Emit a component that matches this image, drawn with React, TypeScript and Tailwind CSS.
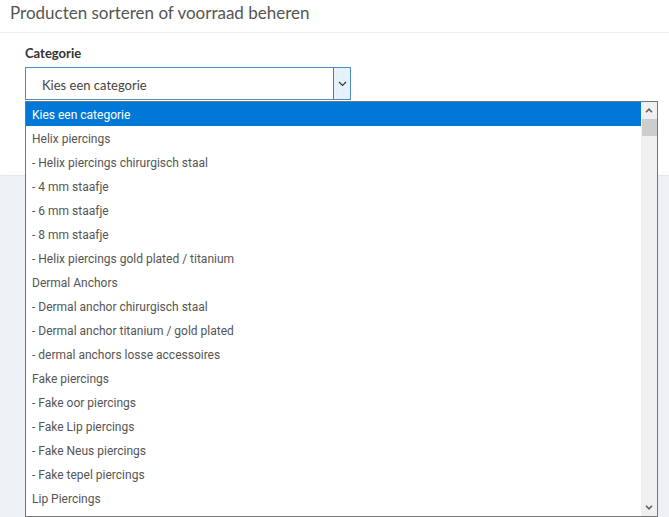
import React from "react";

const items = [
  "Kies een categorie",
  "Helix piercings",
  "- Helix piercings chirurgisch staal",
  "- 4 mm staafje",
  "- 6 mm staafje",
  "- 8 mm staafje",
  "- Helix piercings gold plated / titanium",
  "Dermal Anchors",
  "- Dermal anchor chirurgisch staal",
  "- Dermal anchor titanium / gold plated",
  "- dermal anchors losse accessoires",
  "Fake piercings",
  "- Fake oor piercings",
  "- Fake Lip piercings",
  "- Fake Neus piercings",
  "- Fake tepel piercings",
  "Lip Piercings",
];

export default function App() {
  return (
    <div className="relative w-[669px] h-[517px] overflow-hidden bg-[#edf0f5]" style={{ fontFamily: "Lato, 'Open Sans', sans-serif" }}>
      <div className="bg-white h-[176px] rounded-bl-[3px] border-b border-[#e3e6ea]">
        <div className="h-[33px] border-b border-[#eeeeee] pl-[10px] pt-[1px] text-[17px] leading-[24px] text-[#555]">
          Producten sorteren of voorraad beheren
        </div>
        <div className="pl-[25px] pt-[11px]">
          <div className="text-[13px] font-bold text-[#333] leading-[18px]">Categorie</div>
          <div className="mt-[5px] w-[326px] h-[33px] border border-[#4d8cc0] flex items-center bg-white">
            <div className="flex-1 pl-[16px] pt-[4px] text-[13px] text-[#444]">Kies een categorie</div>
            <div className="w-[17px] h-full bg-[#e5f1fb] border-l border-[#3c7fb1] flex items-center justify-center">
              <svg width="9" height="6" viewBox="0 0 9 6"><path d="M1 1 L4.5 4.5 L8 1" stroke="#333" strokeWidth="1.1" fill="none" /></svg>
            </div>
          </div>
        </div>
      </div>
      <div className="absolute left-[25px] top-[101px] w-[633px] h-[416px] border border-[#767676] bg-white flex">
        <div className="flex-1 flex flex-col">
          {items.map((t, i) => (
            <div
              key={i}
              className={`h-[24px] flex items-center pl-[6px] pt-[2px] text-[12px] whitespace-pre ${i === 0 ? "bg-[#0078d7] text-white" : "text-[#555]"}`}
              style={{ fontFamily: "Roboto, sans-serif" }}
            >
              {t}
            </div>
          ))}
        </div>
        <div className="w-[16px] bg-[#f0f0f0] flex flex-col items-center">
          <div className="h-[17px] flex items-center justify-center">
            <svg width="8" height="5" viewBox="0 0 8 5"><path d="M1 4.2 L4 1.2 L7 4.2" stroke="#606060" strokeWidth="1.6" fill="none" /></svg>
          </div>
          <div className="w-[15px] h-[17px] bg-[#cdcdcd]" />
          <div className="flex-1" />
          <div className="h-[17px] flex items-center justify-center">
            <svg width="8" height="5" viewBox="0 0 8 5"><path d="M1 0.8 L4 3.8 L7 0.8" stroke="#606060" strokeWidth="1.6" fill="none" /></svg>
          </div>
        </div>
      </div>
    </div>
  );
}
